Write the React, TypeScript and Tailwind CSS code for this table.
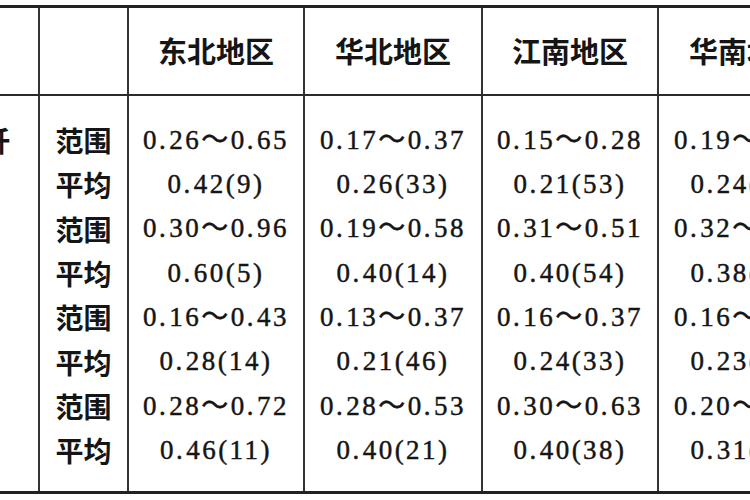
import React from 'react';

const regions = ['东北地区', '华北地区', '江南地区', '华南地区'];

// each region: 8 rows, alternating 范围 / 平均
const data: string[][] = [
  ['0.26～0.65', '0.42(9)', '0.30～0.96', '0.60(5)', '0.16～0.43', '0.28(14)', '0.28～0.72', '0.46(11)'],
  ['0.17～0.37', '0.26(33)', '0.19～0.58', '0.40(14)', '0.13～0.37', '0.21(46)', '0.28～0.53', '0.40(21)'],
  ['0.15～0.28', '0.21(53)', '0.31～0.51', '0.40(54)', '0.16～0.37', '0.24(33)', '0.30～0.63', '0.40(38)'],
  ['0.19～0.45', '0.24(40)', '0.32～0.60', '0.38(22)', '0.16～0.40', '0.23(30)', '0.20～0.50', '0.31(25)'],
];

const labels = ['范围', '平均', '范围', '平均', '范围', '平均', '范围', '平均'];

const widths = ['w-[176px]', 'w-[178px]', 'w-[176px]', 'w-[176px]'];

const cjk = { fontFamily: '"Noto Sans CJK SC", "Noto Sans", sans-serif' };
const num = { fontFamily: '"Liberation Serif", "Noto Sans CJK SC", serif' };

const Num = ({ text }: { text: string }) => {
  const parts = text.split('.');
  return (
    <span className="tracking-[2.5px] [-webkit-text-stroke:0.45px_#151515]" style={num}>
      {parts.map((p, i) => (
        <React.Fragment key={i}>
          {i > 0 && <span className="mr-[1px]">.</span>}
          {p}
        </React.Fragment>
      ))}
    </span>
  );
};

const App = () => {
  return (
    <div className="w-[750px] h-[500px] overflow-hidden bg-white pt-[5px] text-[#151515]">
      <div className="w-[840px] border-t-[3px] border-b-[3px] border-[#222]">
        {/* header */}
        <div className="flex h-[88px] border-b-2 border-[#2a2a2a]">
          <div className="w-[40px] shrink-0 border-r-2 border-[#333]" />
          <div className="w-[89px] shrink-0 border-r-2 border-[#333]" />
          {regions.map((r, i) => (
            <div
              key={r}
              className={`${widths[i]} shrink-0 flex items-center justify-center text-[29px] font-bold ${i < 3 ? 'border-r-2 border-[#333]' : ''}`}
              style={cjk}
            >
              {r}
            </div>
          ))}
        </div>

        {/* body */}
        <div className="flex h-[395px]">
          <div className="w-[40px] shrink-0 border-r-2 border-[#333] pt-[22px] overflow-hidden">
            <div className="h-[44px] flex items-center text-[28px] font-bold ml-[-18px]" style={cjk}>
              纤
            </div>
          </div>
          <div className="w-[89px] shrink-0 border-r-2 border-[#333] pt-[22px] flex flex-col">
            {labels.map((l, i) => (
              <div key={i} className="h-[44.3px] flex items-center justify-center text-[28px] font-bold" style={cjk}>
                {l}
              </div>
            ))}
          </div>
          {data.map((col, i) => (
            <div
              key={i}
              className={`${widths[i]} shrink-0 pt-[22px] flex flex-col ${i < 3 ? 'border-r-2 border-[#333]' : ''}`}
            >
              {col.map((v, j) => (
                <div key={j} className="h-[44.3px] flex items-center justify-center text-[27px]">
                  <Num text={v} />
                </div>
              ))}
            </div>
          ))}
        </div>
      </div>
    </div>
  );
};

export default App;
